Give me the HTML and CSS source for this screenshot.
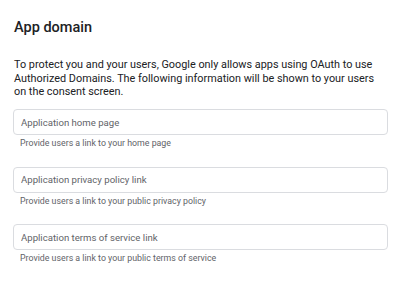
FILE: index.html
```html
<!DOCTYPE html>
<html lang="en">
<head>
    <meta charset="UTF-8">
    <title>App domain</title>
    <link rel="stylesheet" href="styles.css">
</head>
<body>
    <div class="section">
        <h2>App domain</h2>
        <p class="intro">To protect you and your users, Google only allows apps using OAuth to use Authorized Domains. The following information will be shown to your users on the consent screen.</p>

        <div class="field">
            <input type="url" placeholder="Application home page">
            <div class="hint">Provide users a link to your home page</div>
        </div>
        <div class="field">
            <input type="url" placeholder="Application privacy policy link">
            <div class="hint">Provide users a link to your public privacy policy</div>
        </div>
        <div class="field">
            <input type="url" placeholder="Application terms of service link">
            <div class="hint">Provide users a link to your public terms of service</div>
        </div>
    </div>
</body>
</html>
```

FILE: styles.css
```css
* {
    margin: 0;
    padding: 0;
    box-sizing: border-box;
}

body {
    font-family: Roboto, "Liberation Sans", sans-serif;
    background: #fff;
    color: #202124;
}

.section {
    padding: 18px 22px 0 13px;
}

.section h2 {
    font-size: 14.5px;
    font-weight: 500;
    line-height: 20px;
    padding-left: 1px;
    margin-bottom: 20px;
}

.intro {
    font-size: 10.85px;
    line-height: 13.5px;
    padding-left: 1px;
    margin-bottom: 10.5px;
}

.field {
    margin-bottom: 15.5px;
}

.field input {
    display: block;
    width: 100%;
    height: 26px;
    padding: 0 7px;
    border: 1px solid #dadce0;
    border-radius: 4px;
    font-family: inherit;
    font-size: 9.6px;
    color: #202124;
}

.field input::placeholder {
    color: #5f6368;
}

.hint {
    font-size: 8.8px;
    line-height: 16px;
    color: #5f6368;
    padding-left: 7px;
}
```
